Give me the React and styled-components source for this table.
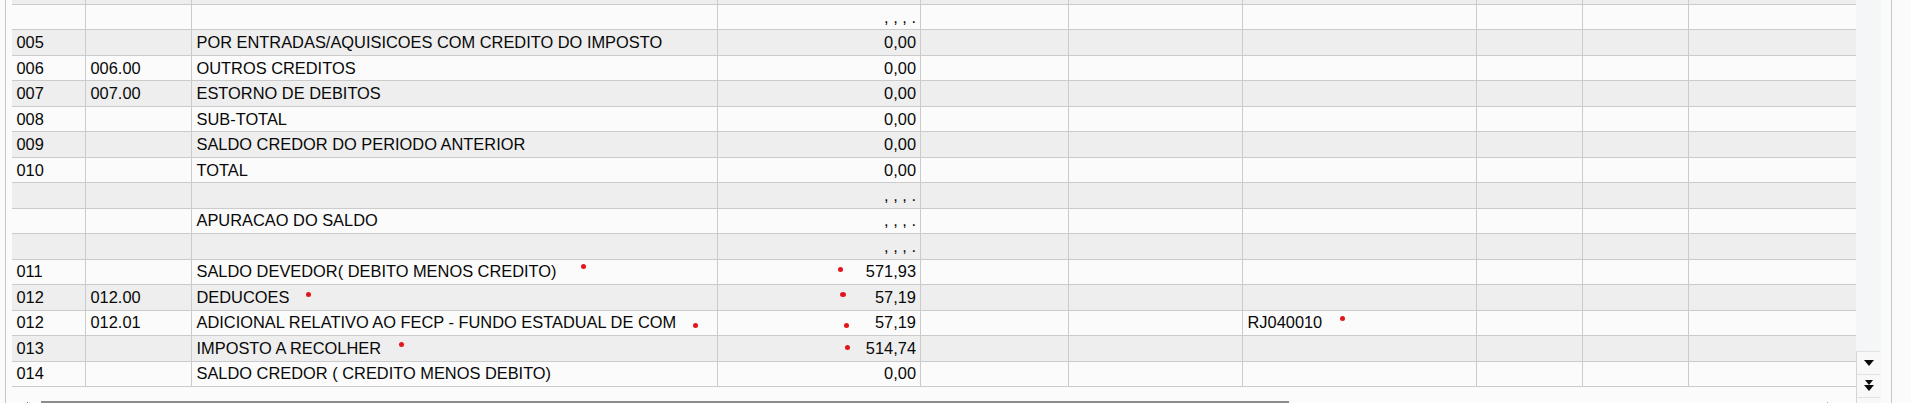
import React from "react";
import styled, { createGlobalStyle } from "styled-components";

// larguras das colunas (inclui a linha da direita)
const colunas = [74, 106, 526, 203, 148, 174, 234, 106, 106, 167];
const ALTURA_LINHA = 25.47;

const vazio = ", , , .";

const linhas = [
  { oculta: true },
  { valor: vazio },
  { cod: "005", desc: "POR ENTRADAS/AQUISICOES COM CREDITO DO IMPOSTO", valor: "0,00" },
  { cod: "006", sub: "006.00", desc: "OUTROS CREDITOS", valor: "0,00" },
  { cod: "007", sub: "007.00", desc: "ESTORNO DE DEBITOS", valor: "0,00" },
  { cod: "008", desc: "SUB-TOTAL", valor: "0,00" },
  { cod: "009", desc: "SALDO CREDOR DO PERIODO ANTERIOR", valor: "0,00" },
  { cod: "010", desc: "TOTAL", valor: "0,00" },
  { valor: vazio },
  { desc: "APURACAO DO SALDO", valor: vazio },
  { valor: vazio },
  {
    cod: "011",
    desc: "SALDO DEVEDOR( DEBITO MENOS CREDITO)",
    valor: "571,93",
    marcas: { desc: [388.8, 4.5], valor: [120.2, 7.8] },
  },
  {
    cod: "012",
    sub: "012.00",
    desc: "DEDUCOES",
    valor: "57,19",
    marcas: { desc: [114.2, 6.7], valor: [122.3, 6.7, 6] },
  },
  {
    cod: "012",
    sub: "012.01",
    desc: "ADICIONAL RELATIVO AO FECP - FUNDO ESTADUAL DE COM",
    valor: "57,19",
    ref: "RJ040010",
    marcas: { desc: [501.2, 12.6], valor: [125.5, 12.6], ref: [96.5, 5.6] },
  },
  {
    cod: "013",
    desc: "IMPOSTO A RECOLHER",
    valor: "514,74",
    marcas: { desc: [207.2, 5.7], valor: [127.2, 9.1] },
  },
  { cod: "014", desc: "SALDO CREDOR ( CREDITO MENOS DEBITO)", valor: "0,00" },
];

const Marca = ({ pos }) =>
  pos ? <Ponto style={{ left: pos[0], top: pos[1] }} $w={pos[2] || 5} /> : null;

const Linha = ({ linha, cinza }) => {
  const m = linha.marcas || {};
  return (
    <Row $cinza={cinza}>
      <Cell>{linha.cod}</Cell>
      <Cell>{linha.sub}</Cell>
      <Cell>
        {linha.desc}
        <Marca pos={m.desc} />
      </Cell>
      <Cell $direita>
        {linha.valor}
        <Marca pos={m.valor} />
      </Cell>
      <Cell />
      <Cell />
      <Cell>
        {linha.ref}
        <Marca pos={m.ref} />
      </Cell>
      <Cell />
      <Cell />
      <Cell />
    </Row>
  );
};

const App = () => {
  return (
    <>
      <GlobalStyle />
      <Panel>
        <GridArea>
          <Rows>
            {linhas.map((l, i) => (
              <Linha key={i} linha={l} cinza={i % 2 === 0} />
            ))}
          </Rows>
          <HScroll>
            <ArrowBtn $w={29}>
              <svg width="10" height="14" viewBox="0 0 10 14">
                <polygon points="9,0 9,14 1,7" fill="#111" />
              </svg>
            </ArrowBtn>
            <Thumb />
            <Spacer />
            <ArrowBtn $w={30} $left>
              <svg width="10" height="14" viewBox="0 0 10 14">
                <polygon points="1,0 1,14 9,7" fill="#777" />
              </svg>
            </ArrowBtn>
          </HScroll>
        </GridArea>
        <VScroll>
          <Track />
          <ScrollBtn>
            <svg width="10" height="6" viewBox="0 0 10 6">
              <polygon points="0,0 10,0 5,6" fill="#0a0a0a" />
            </svg>
          </ScrollBtn>
          <ScrollBtn>
            <svg width="10" height="12" viewBox="0 0 10 12">
              <polygon points="1,0 9,0 5,5" fill="#0a0a0a" />
              <polygon points="0,5 10,5 5,11" fill="#0a0a0a" />
            </svg>
          </ScrollBtn>
          <ScrollBtn />
        </VScroll>
      </Panel>
    </>
  );
};

const GlobalStyle = createGlobalStyle`
  html, body {
    margin: 0;
    padding: 0;
    background: #fbfbfb;
    overflow: hidden;
  }
  body {
    font-family: "Liberation Sans", Arial, sans-serif;
  }
`;

const Panel = styled.div`
  display: flex;
  box-sizing: border-box;
  width: 1887px;
  height: 440px;
  margin-left: 5px;
  padding: 0 10px 0 6px;
  border-left: 1px solid #c6c6c6;
  border-right: 1px solid #c6c6c6;
  overflow: hidden;
`;

const GridArea = styled.div`
  flex: none;
  width: 1844px;
  display: flex;
  flex-direction: column;
`;

const Rows = styled.div`
  margin-top: ${5 - ALTURA_LINHA}px;
`;

const Row = styled.div`
  display: grid;
  grid-template-columns: ${colunas.map((c) => c + "px").join(" ")};
  box-sizing: border-box;
  height: ${ALTURA_LINHA}px;
  border-bottom: 1px solid #cbcbcb;
  background: ${(p) => (p.$cinza ? "#eeeeee" : "#fbfbfb")};
`;

const Cell = styled.div`
  position: relative;
  display: flex;
  align-items: center;
  justify-content: ${(p) => (p.$direita ? "flex-end" : "flex-start")};
  box-sizing: border-box;
  padding: 0 4px 0 4.5px;
  border-right: 1px solid #cbcbcb;
  font-size: 16.4px;
  color: #080808;
  white-space: nowrap;

  &:last-child {
    border-right: none;
  }
`;

const Ponto = styled.span`
  position: absolute;
  width: ${(p) => p.$w}px;
  height: 5px;
  border-radius: 50%;
  background: #e3141c;
`;

const HScroll = styled.div`
  display: flex;
  align-items: flex-start;
  height: 24px;
  margin-top: 12px;
`;

const ArrowBtn = styled.div`
  flex: none;
  width: ${(p) => p.$w}px;
  display: flex;
  justify-content: ${(p) => (p.$left ? "flex-start" : "flex-end")};
  padding-top: 3px;
  box-sizing: border-box;
  padding-right: ${(p) => (p.$left ? 0 : 12)}px;
`;

const Thumb = styled.div`
  flex: none;
  width: 1248px;
  height: 16px;
  margin-top: 2px;
  box-sizing: border-box;
  border-top: 2px solid #8c8c8c;
  background: #cdcdcd;
`;

const Spacer = styled.div`
  flex: 1;
`;

const VScroll = styled.div`
  flex: none;
  width: 25px;
  display: flex;
  flex-direction: column;
  background: #f5f6f8;
`;

const Track = styled.div`
  height: 351px;
`;

const ScrollBtn = styled.div`
  height: 23px;
  box-sizing: border-box;
  display: flex;
  align-items: center;
  justify-content: center;
  background: #f8f8f8;
  border-left: 1px solid #d4d4d4;
  border-top: 1px solid #e2e2e2;
  margin-right: 1px;
`;

export default App;
